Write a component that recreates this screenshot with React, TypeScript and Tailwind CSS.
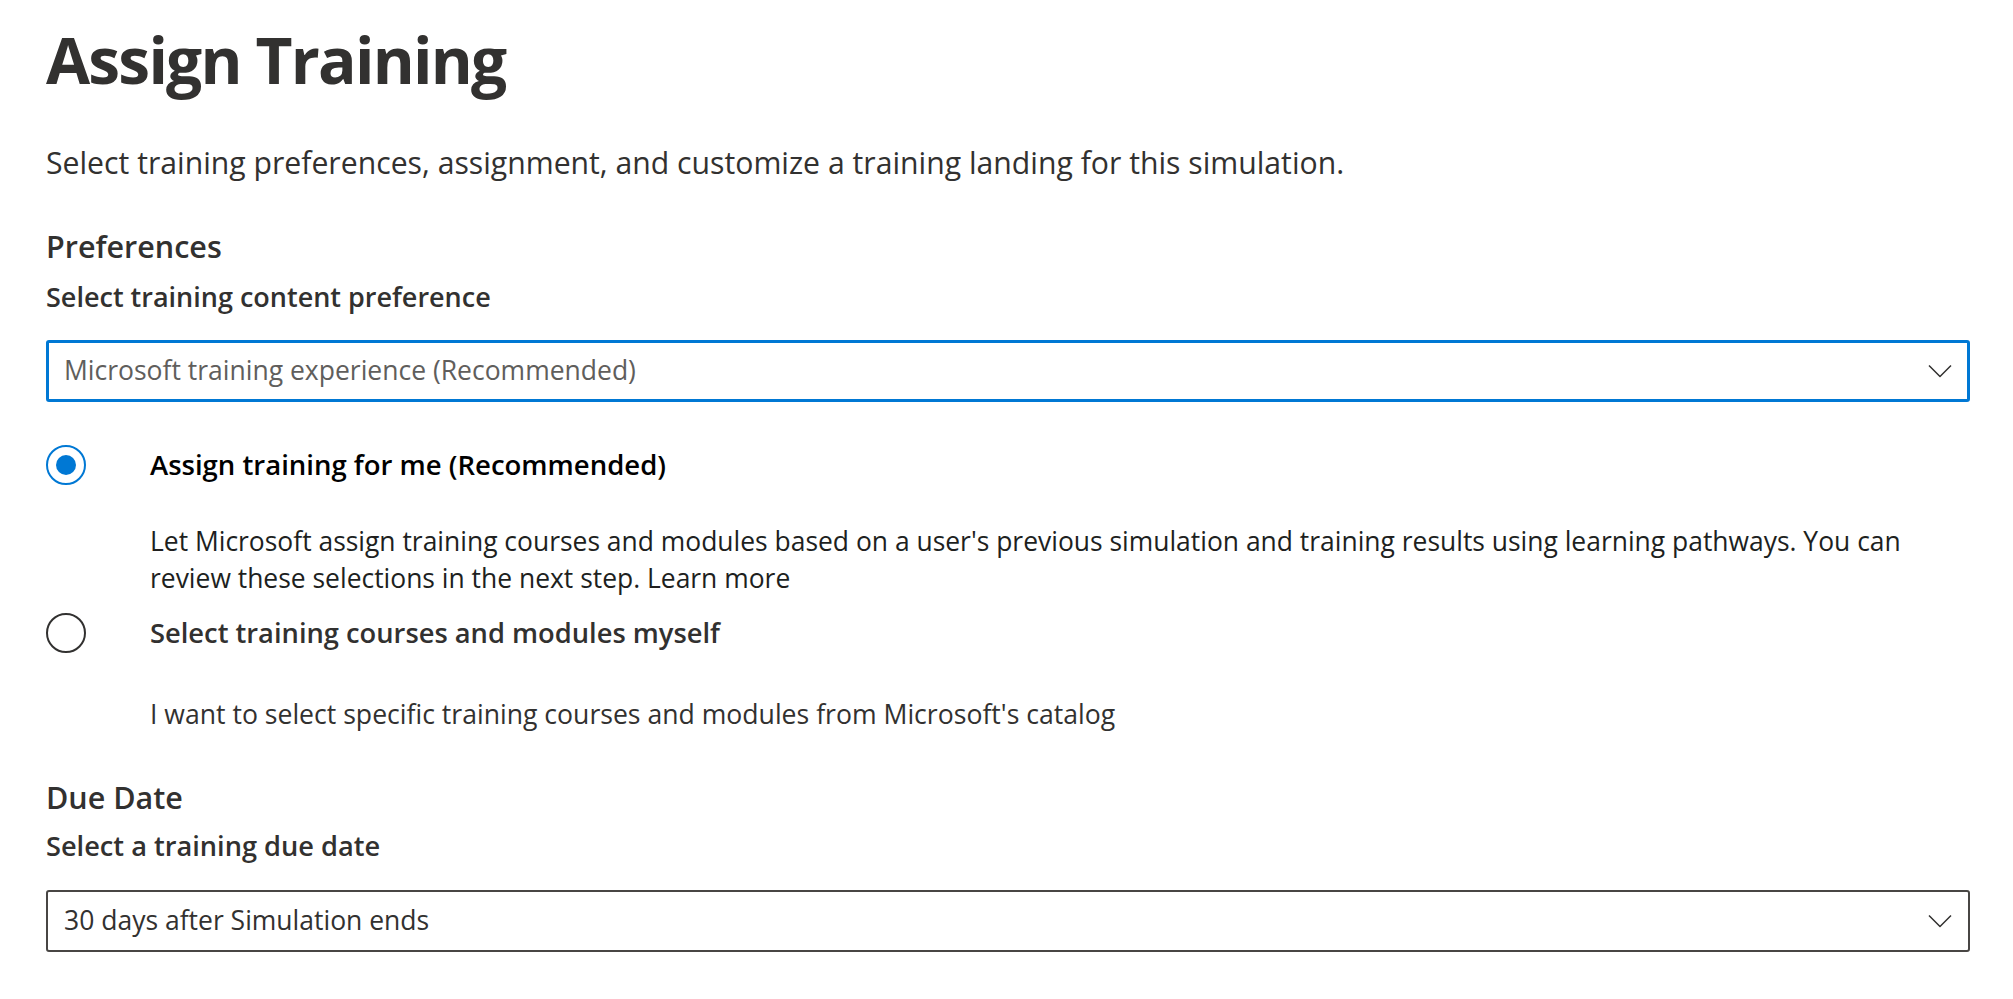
import React, { useState } from "react";

const font = { fontFamily: '"Open Sans", "Noto Sans", sans-serif' };

function Chevron() {
  return (
    <svg width="24" height="14" viewBox="0 0 24 14" fill="none" aria-hidden="true">
      <path d="M1 1.5L12 12.5L23 1.5" stroke="#323130" strokeWidth="1.5" strokeLinejoin="round" />
    </svg>
  );
}

function Radio({ checked }: { checked: boolean }) {
  return (
    <span
      className={
        "flex h-[40px] w-[40px] shrink-0 items-center justify-center rounded-full border-2 " +
        (checked ? "border-[#0078d4]" : "border-[#323130]")
      }
    >
      {checked && <span className="h-[20px] w-[20px] rounded-full bg-[#0078d4]" />}
    </span>
  );
}

export default function App() {
  const [choice, setChoice] = useState<"auto" | "manual">("auto");

  return (
    <div className="min-h-screen bg-white pl-[46px] pr-[43px] pt-[24px]" style={font}>
      <h1 className="text-[64px] font-bold leading-[72px] tracking-[-1.8px] text-[#323130]">Assign Training</h1>

      <p className="mt-[47px] text-[30.2px] leading-[40px] text-[#323130]">
        Select training preferences, assignment, and customize a training landing for this simulation.
      </p>

      {/* Preferences */}
      <h2 className="mt-[43px] text-[30.5px] font-semibold leading-[40px] text-[#323130]">Preferences</h2>
      <p className="mt-[13px] text-[27px] font-semibold leading-[36px] text-[#323130]">
        Select training content preference
      </p>

      <button
        type="button"
        className="mt-[25px] flex h-[62px] w-full items-center justify-between rounded-[3px] border-[3px] border-[#0078d4] pl-[15px] pr-[15px] text-left"
      >
        <span className="text-[26.5px] text-[#605e5c]">Microsoft training experience (Recommended)</span>
        <Chevron />
      </button>

      <div className="mt-[43px]">
        <label className="flex cursor-pointer items-center" onClick={() => setChoice("auto")}>
          <Radio checked={choice === "auto"} />
          <span className="ml-[64px] text-[27.5px] font-semibold leading-[40px] text-black">
            Assign training for me (Recommended)
          </span>
        </label>
        <p className="ml-[104px] mt-[38px] max-w-[1790px] text-[26.45px] leading-[37px] text-[#201f1e]">
          Let Microsoft assign training courses and modules based on a user's previous simulation and training results
          using learning pathways. You can review these selections in the next step. Learn more
        </p>

        <label className="mt-[16px] flex cursor-pointer items-center" onClick={() => setChoice("manual")}>
          <Radio checked={choice === "manual"} />
          <span className="ml-[64px] text-[27.3px] font-semibold leading-[40px] text-[#323130]">
            Select training courses and modules myself
          </span>
        </label>
        <p className="ml-[104px] mt-[43px] text-[26.6px] leading-[37px] text-[#323130]">
          I want to select specific training courses and modules from Microsoft's catalog
        </p>
      </div>

      {/* Due date */}
      <h2 className="mt-[44px] text-[30.5px] font-semibold leading-[40px] text-[#323130]">Due Date</h2>
      <p className="mt-[11px] text-[27.2px] font-semibold leading-[36px] text-[#323130]">Select a training due date</p>

      <button
        type="button"
        className="mt-[26px] flex h-[62px] w-full items-center justify-between rounded-[3px] border-2 border-[#484644] pl-[16px] pr-[16px] text-left"
      >
        <span className="text-[26.5px] text-[#323130]">30 days after Simulation ends</span>
        <Chevron />
      </button>
    </div>
  );
}
